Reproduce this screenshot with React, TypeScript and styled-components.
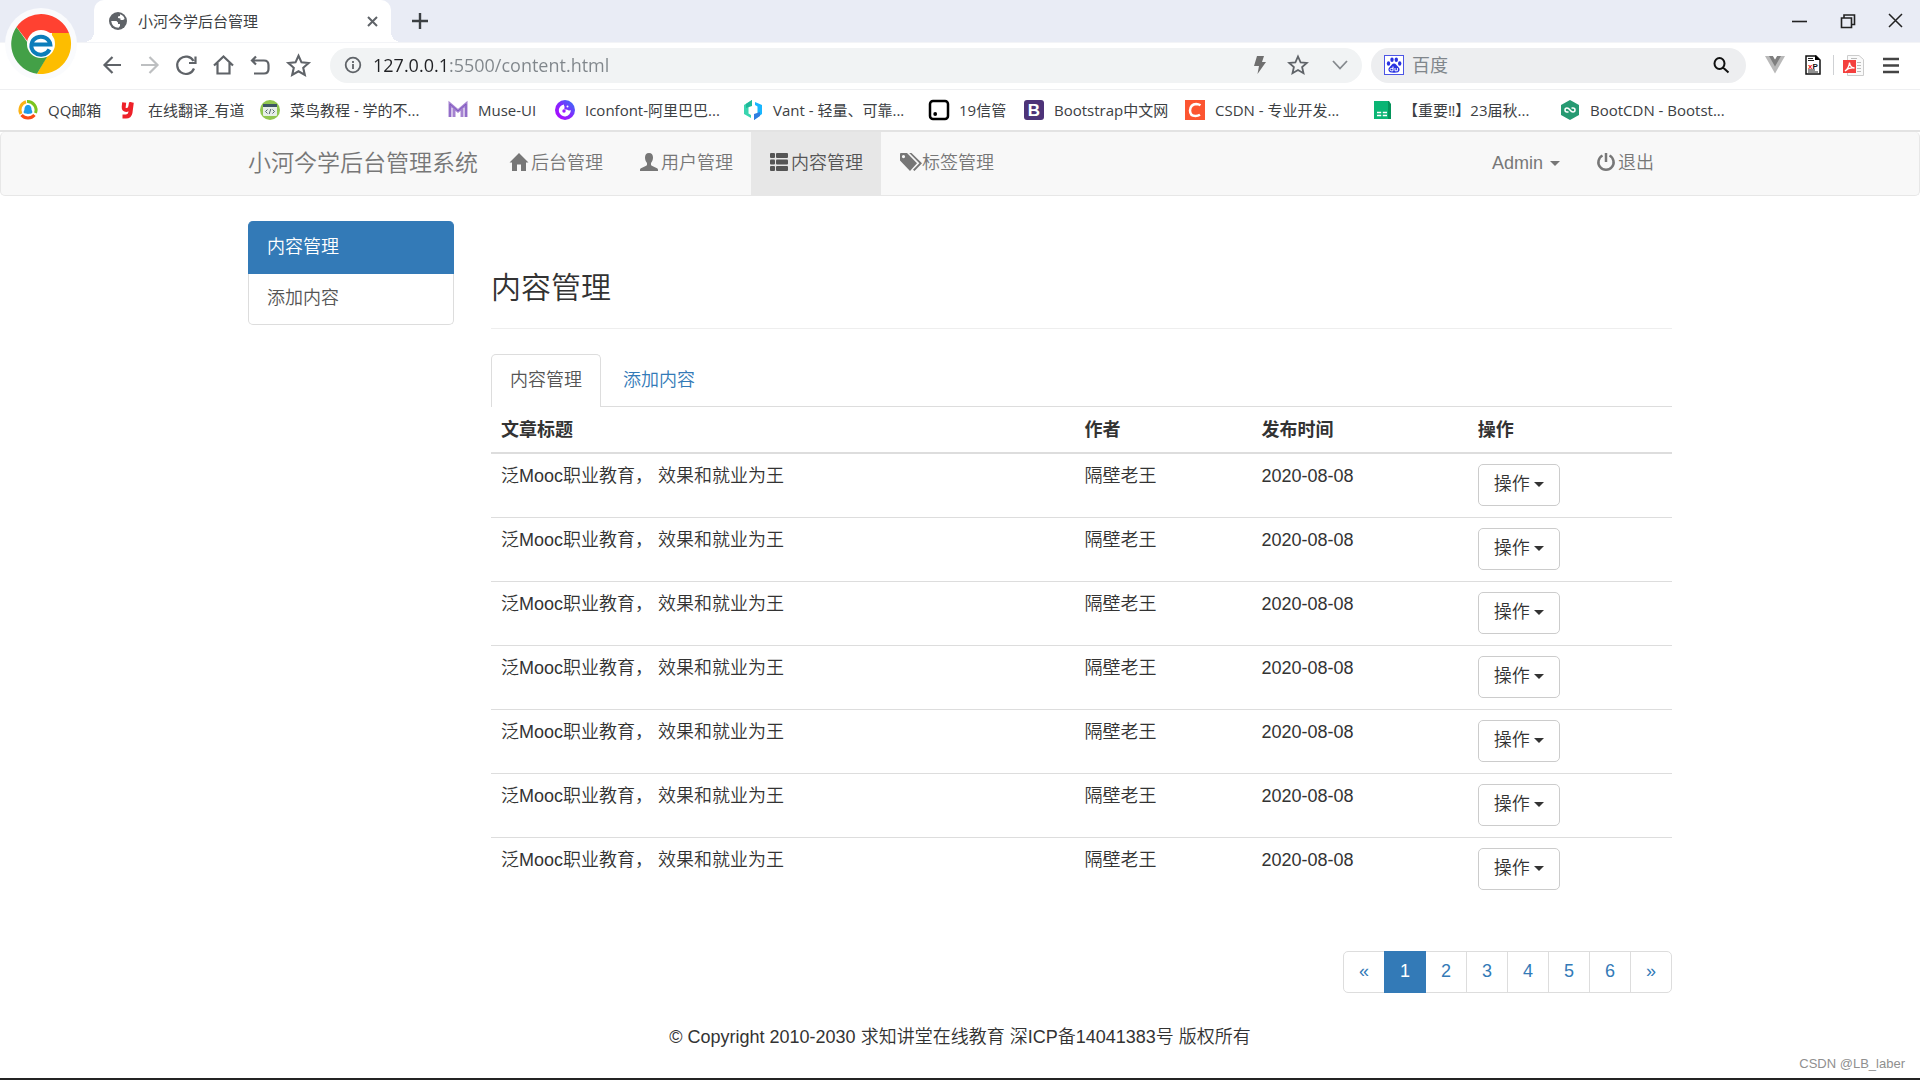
import React from 'react';
import styled, { createGlobalStyle, css } from 'styled-components';

const uiFont = `'Open Sans', 'Noto Sans CJK SC', sans-serif`;
const pageFont = `'Liberation Sans', 'Noto Sans CJK SC', sans-serif`;

const GlobalStyle = createGlobalStyle`
  *, *::before, *::after { box-sizing: border-box; }
  body { margin: 0; background: #fff; font-family: ${pageFont}; font-size: 18px; line-height: 25px; font-weight: 350; color: #333; }
  a { text-decoration: none; color: inherit; }
  button, input { font: inherit; color: inherit; margin: 0; padding: 0; border: 0; background: none; }
  ul { list-style: none; margin: 0; padding: 0; }
  svg { display: block; flex: none; overflow: visible; }
`;

const Screen = styled.div`
  min-height: 100vh;
  display: flex;
  flex-direction: column;
  border-bottom: 2px solid #242424;
  position: relative;
`;

/* ---------- browser frame ---------- */

const Browser = styled.header`
  font-family: ${uiFont};
  font-weight: 400;
  position: relative;
  color: #3c4043;
`;

const Logo = styled.div`
  position: absolute;
  left: 5px;
  top: 8px;
`;

const TabStrip = styled.div`
  height: 43px;
  background: #e9ecf5;
  border-bottom: 1px solid #f3f4f7;
  display: flex;
  align-items: flex-end;
  padding: 0 16px 0 94px;
`;

const BrowserTab = styled.div`
  width: 297px;
  height: 42px;
  background: #fff;
  border-radius: 10px 10px 0 0;
  display: flex;
  align-items: center;
  gap: 11px;
  padding: 0 13px 0 15px;
  font-size: 15px;
  position: relative;

  &::before, &::after {
    content: '';
    position: absolute;
    bottom: 0;
    width: 10px;
    height: 10px;
  }
  &::before { left: -10px; background: radial-gradient(circle at 0 0, transparent 10px, #fff 10px); }
  &::after { right: -10px; background: radial-gradient(circle at 100% 0, transparent 10px, #fff 10px); }
`;

const TabTitle = styled.span`
  flex: 1;
`;

const IconButton = styled.button`
  display: flex;
  align-items: center;
  justify-content: center;
  flex: none;
`;

const NewTab = styled(IconButton)`
  width: 18px;
  height: 42px;
  margin-left: 20px;
`;

const WindowControls = styled.div`
  margin-left: auto;
  height: 42px;
  display: flex;
  align-items: center;
  gap: 32px;
`;

const Toolbar = styled.div`
  height: 47px;
  border-bottom: 1px solid #eeeff1;
  display: flex;
  align-items: center;
  padding: 0 20px 2px 102px;
`;

const NavButtons = styled.div`
  display: flex;
  gap: 16px;
  margin-right: 20px;
`;

const AddressBar = styled.label`
  flex: 1;
  height: 35px;
  border-radius: 18px;
  background: #f1f3f4;
  display: flex;
  align-items: center;
  padding: 0 12px 0 14px;
  margin-right: 9px;
`;

const UrlInput = styled.input`
  flex: 1;
  min-width: 0;
  height: 30px;
  margin-left: 11px;
  font-size: 18px;
  outline: none;
  color: #80868b;
  background: linear-gradient(90deg, #202124 76px, #80868b 76px);
  -webkit-background-clip: text;
  background-clip: text;
  -webkit-text-fill-color: transparent;
`;

const AddressActions = styled.div`
  display: flex;
  align-items: center;
  gap: 22px;
`;

const SearchBox = styled.label`
  width: 375px;
  height: 35px;
  border-radius: 18px;
  background: #edeef0;
  display: flex;
  align-items: center;
  gap: 8px;
  padding: 0 17px 0 13px;
  margin-right: 19px;
`;

const SearchInput = styled.input`
  flex: 1;
  min-width: 0;
  font-size: 18px;
  outline: none;
  &::placeholder { color: #80868b; opacity: 1; }
`;

const Extensions = styled.div`
  display: flex;
  align-items: center;
`;

const ExtButton = styled(IconButton)<{ $gap?: number }>`
  margin-right: ${(p) => p.$gap ?? 0}px;
`;

const ExtDivider = styled.span`
  width: 1px;
  height: 20px;
  background: #cfd1d4;
  margin-right: 9px;
`;

const BookmarkBar = styled.nav`
  height: 42px;
  border-bottom: 2px solid #e3e3e3;
  display: flex;
  align-items: center;
  padding-left: 18px;
`;

const Bookmark = styled.a<{ $width: number }>`
  width: ${(p) => p.$width}px;
  flex: none;
  display: flex;
  align-items: center;
  gap: 10px;
  font-size: 15px;
  line-height: 20px;
  white-space: nowrap;
`;

/* ---------- site navigation ---------- */

const SiteNav = styled.nav`
  height: 64px;
  background: #f8f8f8;
  border: 1px solid #e7e7e7;
  border-top: 0;
  border-radius: 5px;
  margin-bottom: 25px;
`;

const Container = styled.div`
  width: 100%;
  max-width: 1424px;
  margin: 0 auto;
`;

const NavInner = styled(Container)`
  height: 100%;
  display: flex;
  color: #777;
`;

const Brand = styled.a`
  font-size: 23px;
  display: flex;
  align-items: center;
  margin-right: 13px;
`;

const NavList = styled.ul<{ $end?: boolean }>`
  display: flex;
  ${(p) => p.$end && css`margin-left: auto;`}
`;

const NavLink = styled.a<{ $active?: boolean; $gap?: number }>`
  height: 100%;
  display: flex;
  align-items: center;
  gap: ${(p) => p.$gap ?? 3}px;
  padding: 0 18px 0 19px;
  svg { margin-bottom: 3px; }
  ${(p) => p.$active && css`background: #e7e7e7; color: #555;`}
`;

const Caret = styled.span`
  border: 5px solid transparent;
  border-top-color: currentColor;
  border-bottom-width: 0;
`;

/* ---------- content ---------- */

const Layout = styled(Container)`
  display: grid;
  grid-template-columns: 206px minmax(0, 1fr);
  column-gap: 37px;
  align-items: start;
`;

const SideMenu = styled.nav`
  display: flex;
  flex-direction: column;
`;

const SideLink = styled.a<{ $active?: boolean }>`
  padding: 12px 18px 13px;
  border: 1px solid #ddd;
  border-top: 0;
  border-radius: 0 0 5px 5px;
  color: #555;
  ${(p) => p.$active && css`
    padding: 14px 18px 13px;
    border-color: #337ab7;
    border-radius: 5px 5px 0 0;
    background: #337ab7;
    color: #fff;
  `}
`;

const PageTitle = styled.h1`
  font-size: 30px;
  line-height: 34px;
  font-weight: 350;
  margin: 50px 0 25px;
  padding-bottom: 23px;
  border-bottom: 1px solid #eee;
`;

const Tabs = styled.div`
  display: flex;
  gap: 3px;
  border-bottom: 1px solid #ddd;
`;

const Tab = styled.a<{ $active?: boolean }>`
  padding: 13px 18px;
  border: 1px solid transparent;
  border-bottom: 0;
  border-radius: 5px 5px 0 0;
  color: #337ab7;
  ${(p) => p.$active && css`
    color: #555;
    background: #fff;
    border-color: #ddd;
    margin-bottom: -1px;
    padding-bottom: 14px;
  `}
`;

const Table = styled.table`
  width: 100%;
  border-spacing: 0;
  table-layout: fixed;

  th { text-align: left; padding: 11px 10px 9px; border-bottom: 2px solid #ddd; }
  td { vertical-align: top; padding: 10px 10px 11px; }
  tr + tr td { border-top: 1px solid #ddd; }
`;

const Col = styled.col<{ $share: number }>`
  width: ${(p) => p.$share}%;
`;

const ActionButton = styled.button`
  height: 42px;
  display: flex;
  align-items: center;
  gap: 4px;
  padding: 0 15px 2px;
  background: #fff;
  border: 1px solid #ccc;
  border-radius: 5px;
`;

const Pagination = styled.ul`
  display: flex;
  justify-content: flex-end;
  margin-top: 50px;
`;

const PageItem = styled.li`
  margin-left: -1px;
  &:first-child a { border-radius: 5px 0 0 5px; }
  &:last-child a { border-radius: 0 5px 5px 0; }
`;

const PageLink = styled.a<{ $active?: boolean }>`
  display: block;
  position: relative;
  padding: 7px 15px 8px;
  border: 1px solid #ddd;
  color: #337ab7;
  ${(p) => p.$active && css`
    z-index: 1;
    background: #337ab7;
    border-color: #337ab7;
    color: #fff;
  `}
`;

const Footer = styled.footer`
  text-align: center;
  padding: 32px 0 25px;
`;

const Watermark = styled.span`
  position: absolute;
  right: 15px;
  bottom: 4px;
  font-size: 13px;
  line-height: 20px;
  color: #8f8f8f;
`;

/* ---------- icons ---------- */

const line = (d: string, size = 20, color = '#5f6368', w = 2) => (
  <svg width={size} height={size} viewBox={`0 0 ${size} ${size}`} fill="none" stroke={color} strokeWidth={w}>
    <path d={d} />
  </svg>
);

const BrowserLogo = () => (
  <svg width="72" height="72" viewBox="-36 -36 72 72">
    <circle r="36" fill="#fafbfd" />
    <path d="M28-11A30 30 0 0 1-4 29.7L10 5 11-11Z" fill="#fdbd00" />
    <path d="M-24.5-17A30 30 0 0 0-4 29.7L6 13-11 2Z" fill="#43a047" />
    <path d="M-24.5-17A30 30 0 0 1 28-11H0L-13-2Z" fill="#ff4131" />
    <circle r="14" fill="#fff" />
    <path d="M8.500 5.500A9.500 9 0 1 1 9.300 .5H-9" fill="none" stroke="#0b7dba" strokeWidth="4" />
  </svg>
);

const Globe = () => (
  <svg width="18" height="18" viewBox="0 0 18 18">
    <circle cx="9" cy="9" r="9" fill="#5f6368" />
    <path d="M11 2.300Q14.800 3.500 15.600 7L14 8H11.500V6.500L9 6V4.500L11 4Z" fill="#fff" />
    <path d="M2.200 9H7.500L9 10.500V12H11V14L9.500 15.800Q3 15.500 2.200 9Z" fill="#fff" />
  </svg>
);

const Glyph = ({ children, width = 18 }: { children: React.ReactNode; width?: number }) => (
  <svg width={width} height="18" viewBox={`0 0 ${width} 18`} fill="currentColor">{children}</svg>
);
const HomeGlyph = () => <Glyph><path d="M9 0 18.500 9.500H16V18H11V11.500H7V18H2V9.500H-.5Z" /></Glyph>;
const UserGlyph = () => (
  <Glyph><path d="M9 0c2.800 0 4 1.800 4 4.500 0 2-.7 4.200-2 5.500v1.800c0 .5.3.8.8 1l4.700 2.300c.9.400 1.500 1 1.500 1.900v1H0v-1c0-.9.600-1.500 1.500-1.900l4.700-2.300c.5-.2.8-.5.8-1V10C5.700 8.700 5 6.500 5 4.500 5 1.800 6.200 0 9 0Z" /></Glyph>
);
const ListGlyph = () => (
  <Glyph>
    {[0, 6.5, 13].map((y) => (
      <g key={y}><rect y={y} width="5" height="5" rx="1" /><rect x="6" y={y} width="12" height="5" rx="1" /></g>
    ))}
  </Glyph>
);
const TagsGlyph = () => (
  <Glyph width={22}>
    <path fillRule="evenodd" d="M0 1.200C0 .5.500 0 1.200 0H7l10 10.300-7 7.700L0 7.500ZM3.500 2A1.600 1.600 0 1 0 3.500 5.200 1.600 1.600 0 0 0 3.500 2Z" />
    <path d="M9.200 0h2.300L22 10.300 14.500 18l-1.500-1.300 6.400-6.400Z" />
  </Glyph>
);
const PowerGlyph = () => (
  <svg width="18" height="18" viewBox="0 0 18 18" fill="none" stroke="currentColor" strokeWidth="2.500">
    <path d="M5.500 2.500a7.600 7.600 0 1 0 7 0M9 0v9" />
  </svg>
);

const StarPath = 'M10 1.500 12.600 7.300 18.800 7.900 14.100 12 15.500 18.200 10 15 4.500 18.200 5.900 12 1.200 7.900 7.400 7.300Z';

const Baidu = () => (
  <svg width="20" height="20" viewBox="0 0 20 20" fill="#2932e1">
    <rect x=".5" y=".5" width="19" height="19" fill="#fff" stroke="#4c55e6" />
    <ellipse cx="4.500" cy="8.500" rx="1.700" ry="2.200" /><ellipse cx="8" cy="4.800" rx="1.700" ry="2.300" />
    <ellipse cx="12.300" cy="4.800" rx="1.700" ry="2.300" /><ellipse cx="15.700" cy="8.500" rx="1.700" ry="2.200" />
    <path d="M10 8.500c1.700 0 2.500 1.800 3.800 3 1.400 1.300 2 2.200 1.700 3.800-.3 1.700-1.800 2.500-5.500 2.500s-5.200-.8-5.500-2.500c-.3-1.600.3-2.500 1.700-3.800 1.300-1.200 2.100-3 3.800-3Z" />
    <path d="M9 11.500v4.300H7.300a1.200 1.200 0 0 1 0-2.400H9M11 13v2.800h2.400V13" fill="none" stroke="#fff" />
  </svg>
);

const QQ = () => (
  <svg width="20" height="20" viewBox="0 0 20 20" fill="none" strokeWidth="3">
    <path d="M3 14A8.500 8.500 0 0 1 8 1.800" stroke="#fbb214" />
    <path d="M9 1.600A8.500 8.500 0 0 1 17.500 13" stroke="#7cc51f" />
    <path d="M3.500 15A8.500 8.500 0 0 0 16.500 15" stroke="#fb4b14" />
    <path d="M10 5c3 0 3.600 2.800 3.600 5 .8 1.300 1 2.500.4 3-2 1.200-6 1.200-8 0-.6-.5-.4-1.700.4-3C6.400 7.800 7 5 10 5Z" fill="#1e9be8" />
  </svg>
);
const Youdao = () => (
  <svg width="20" height="20" viewBox="0 0 20 20" fill="none" stroke="#ee2129" strokeWidth="4">
    <path d="M6.200 2.500 5.700 7q-.2 3 2.600 3 3.400 0 4-3.500L13 2.500M13.800 2.500 12.500 12.500Q11.700 16.500 8 16.500H4.500" />
  </svg>
);
const Runoob = () => (
  <svg width="20" height="20" viewBox="0 0 20 20">
    <circle cx="10" cy="10" r="10" fill="#91c74f" />
    <rect x="3" y="4" width="14" height="12" rx="1" fill="#e6eee8" /><rect x="3" y="4" width="14" height="3" fill="#3e5664" />
    <path d="M7.500 9.500 5.500 11.500l2 2M12.500 9.500l2 2-2 2M10.800 9l-1.600 5" fill="none" stroke="#53666d" />
  </svg>
);
const Muse = () => (
  <svg width="20" height="20" viewBox="0 0 20 20" fill="none">
    <path d="M2 17V4L10 11 18 4V17M6 17V8M14 17V8" stroke="#a583d0" strokeWidth="3" />
    <path d="M2 17V4L10 11 18 4V17" stroke="#7e57c2" />
  </svg>
);
const Iconfont = () => (
  <svg width="20" height="20" viewBox="0 0 20 20">
    <defs><linearGradient id="iconfont" x1="0" y1="1" x2="1" y2="0"><stop stopColor="#b800ff" /><stop offset=".5" stopColor="#8427ff" /><stop offset="1" stopColor="#2b7cf5" /></linearGradient></defs>
    <circle cx="10" cy="10" r="10" fill="url(#iconfont)" />
    <path d="M9 4.500A6 6 0 1 0 15.800 10C14 11.500 12.500 9 11 9.500 9.500 10 9 8.500 9.500 7.500 10 6.500 8.500 5.500 9 4.500Z" fill="#fff" />
    <circle cx="9" cy="11" r="1.700" fill="#9a1aff" /><circle cx="12.500" cy="6.500" r="1" fill="#fff" />
  </svg>
);
const Vant = () => (
  <svg width="20" height="20" viewBox="0 0 20 20">
    <path d="M9 0v4L5.500 6.500v7L8 15v3L1 14V5Z" fill="#39d5b0" /><path d="M9 0v6L3 8V4Z" fill="#20b899" />
    <path d="M11 20v-4l3.500-2.500v-7L12 5V2l7 3v9Z" fill="#18b6ff" /><path d="M11 20v-6l6-2v4Z" fill="#2f7fe0" />
  </svg>
);
const BoxDot = () => (
  <svg width="20" height="20" viewBox="0 0 20 20">
    <rect x="1" y="1" width="18" height="18" rx="3" fill="none" stroke="#000" strokeWidth="2.500" /><circle cx="6.200" cy="14" r="1.900" />
  </svg>
);
const Bootstrap = () => (
  <svg width="20" height="20" viewBox="0 0 20 20">
    <rect width="20" height="20" rx="3" fill="#4d3378" />
    <text x="10" y="16" textAnchor="middle" fontSize="17" fontWeight="700" fill="#fff" fontFamily="Liberation Sans, sans-serif">B</text>
  </svg>
);
const Csdn = () => (
  <svg width="20" height="20" viewBox="0 0 20 20">
    <rect width="20" height="20" fill="#fc5531" />
    <path d="M15.500 5.300Q13.500 4 11.200 4 5.500 4.300 5 10.500 5 16 10.500 16q2.500 0 4.500-1.200" fill="none" stroke="#fff" strokeWidth="2.500" />
  </svg>
);
const Sheet = () => (
  <svg width="20" height="20" viewBox="0 0 20 20">
    <path d="M2 1h14l2 3v15H2Z" fill="#04935a" /><path d="M1 1h14v18H1Z" fill="#0ab574" />
    <path d="M4 12.500h4.200M9.800 12.500H14M4 15.500h4.200M9.800 15.500H14" stroke="#fff" strokeWidth="1.500" />
  </svg>
);
const BootCdn = () => (
  <svg width="20" height="20" viewBox="0 0 20 20">
    <path d="M10 0 19 5V15L10 20 1 15V5Z" fill="#269a72" />
    <path d="M8.500 12H7A2 2 0 0 1 7 8Q8.500 8 10 10T13 12A2 2 0 0 0 13 8H11.500" fill="none" stroke="#fff" strokeWidth="1.500" />
  </svg>
);
const VueDev = () => (
  <svg width="20" height="20" viewBox="0 0 20 20">
    <path d="M0 1H20L10 18.500Z" fill="#b9b9b9" /><path d="M4 1H8L10 4.500 12 1H16L10 11.500Z" fill="#7f7f7f" /><path d="M8 1h4l-2 3.500Z" fill="#fff" />
  </svg>
);
const XPath = () => (
  <svg width="16" height="20" viewBox="0 0 16 20">
    <path d="M1 1H11L15 5V19H1Z" fill="#fff" stroke="#111" strokeWidth="1.500" /><path d="M10 0v5h5Z" />
    <path d="M3 3.500h5M3 5.500h6M3 15h7M3 17h10" stroke="#222" />
    <text x="3" y="13.500" fontSize="8" fontWeight="700" fill="#e11" fontFamily="Liberation Sans, sans-serif">x<tspan fill="#111">P</tspan></text>
  </svg>
);
const Pdf = () => (
  <svg width="21" height="21" viewBox="0 0 21 21">
    <path d="M4.500 .5H16l4.500 4V20.500H4.500Z" fill="#fafafa" stroke="#ccc" /><path d="M8 3.500h6M14 7.500h4M14 10.500h4M14 13.500h4M14 16.500h4" stroke="#bbb" />
    <rect y="5" width="13" height="13" fill="#f4403e" />
    <path d="M2 16q4-3 4.500-8.500Q7 12.500 11.500 13 6 12 2 16Z" fill="none" stroke="#fff" strokeWidth="1.300" />
  </svg>
);

/* ---------- data ---------- */

const bookmarks = [
  { label: 'QQ邮箱', icon: <QQ />, width: 100 },
  { label: '在线翻译_有道', icon: <Youdao />, width: 142 },
  { label: '菜鸟教程 - 学的不...', icon: <Runoob />, width: 188 },
  { label: 'Muse-UI', icon: <Muse />, width: 107 },
  { label: 'Iconfont-阿里巴巴...', icon: <Iconfont />, width: 188 },
  { label: 'Vant - 轻量、可靠...', icon: <Vant />, width: 186 },
  { label: '19信管', icon: <BoxDot />, width: 95 },
  { label: 'Bootstrap中文网', icon: <Bootstrap />, width: 161 },
  { label: 'CSDN - 专业开发...', icon: <Csdn />, width: 188 },
  { label: '【重要‼】23届秋...', icon: <Sheet />, width: 187 },
  { label: 'BootCDN - Bootst...', icon: <BootCdn />, width: 187 },
];

const articles = Array.from({ length: 7 }, (_, id) => ({
  id,
  title: '泛Mooc职业教育， 效果和就业为王',
  author: '隔壁老王',
  date: '2020-08-08',
}));

const pages = ['«', '1', '2', '3', '4', '5', '6', '»'];

export default function App() {
  return (
    <Screen>
      <GlobalStyle />
      <Browser>
        <TabStrip>
          <BrowserTab>
            <Globe />
            <TabTitle>小河今学后台管理</TabTitle>
            <IconButton aria-label="关闭标签页">{line('M1 1 10 10M10 1 1 10', 11, '#5f6368')}</IconButton>
          </BrowserTab>
          <NewTab aria-label="新标签页">{line('M8 0V16M0 8H16', 16, '#3c4043', 2.4)}</NewTab>
          <WindowControls>
            <IconButton aria-label="最小化">{line('M0 8.500H15', 16, '#222', 1.6)}</IconButton>
            <IconButton aria-label="还原">{line('M1.500 5H11.500V14.500H1.500ZM4 5V2H14.500V11.500H11.500', 16, '#222', 1.6)}</IconButton>
            <IconButton aria-label="关闭">{line('M1 1 14 14M14 1 1 14', 16, '#222', 1.5)}</IconButton>
          </WindowControls>
        </TabStrip>

        <Toolbar>
          <NavButtons>
            <IconButton aria-label="后退">{line('M19 10H3M10.500 2 2.500 10 10.500 18', 21, '#5f6368', 2.2)}</IconButton>
            <IconButton aria-label="前进">{line('M2 10H18M10.500 2 18.500 10 10.500 18', 21, '#bdbfc1', 2.2)}</IconButton>
            <IconButton aria-label="刷新">{line('M18 13.500A8.700 8.700 0 1 1 17.500 6M19.500 1.500V8H13', 21, '#5f6368', 2.2)}</IconButton>
            <IconButton aria-label="主页">{line('M1 10.500 10.500 1.500 20 10.500M4.500 8V18.500H16.500V8', 21, '#5f6368', 2.2)}</IconButton>
            <IconButton aria-label="撤销">{line('M6 1.500 2 5.500 6 9.500M2 5.500H14Q18.500 5.500 18.500 10V14Q18.500 18.500 14 18.500H4', 21, '#5f6368', 2.2)}</IconButton>
            <IconButton aria-label="收藏夹">
              <svg width="23" height="23" viewBox="0 0 20 20" fill="none" stroke="#5f6368" strokeWidth="1.800"><path d={StarPath} /></svg>
            </IconButton>
          </NavButtons>
          <AddressBar>
            <svg width="18" height="18" viewBox="0 0 18 18" fill="none" stroke="#5f6368" strokeWidth="1.800">
              <circle cx="9" cy="9" r="7.300" /><path d="M9 8v5M9 5v2" />
            </svg>
            <UrlInput aria-label="地址" defaultValue="127.0.0.1:5500/content.html" />
            <AddressActions>
              <svg width="14" height="18" viewBox="0 0 14 18" fill="#6f6f6f"><path d="M5 0H12L10 6H14L5.500 18 7 10H2Z" /></svg>
              {line(StarPath, 20, '#5f6368', 1.8)}
              {line('M3 6 10 13.500 17 6', 20, '#85898d', 1.8)}
            </AddressActions>
          </AddressBar>
          <SearchBox>
            <Baidu />
            <SearchInput aria-label="搜索" placeholder="百度" />
            {line('M11.500 6.500A5 5.500 0 1 1 1.500 6.500A5 5.500 0 1 1 11.500 6.500M10 10.500 15.500 15.500', 16, '#111', 2)}
          </SearchBox>
          <Extensions>
            <ExtButton $gap={20} aria-label="Vue"><VueDev /></ExtButton>
            <ExtButton $gap={12} aria-label="XPath"><XPath /></ExtButton>
            <ExtDivider />
            <ExtButton $gap={19} aria-label="PDF"><Pdf /></ExtButton>
            <ExtButton aria-label="菜单">{line('M0 2H16M0 8.500H16M0 15H16', 17, '#444', 2.4)}</ExtButton>
          </Extensions>
        </Toolbar>

        <BookmarkBar>
          {bookmarks.map((b) => (
            <Bookmark key={b.label} href="#" $width={b.width}>{b.icon}<span>{b.label}</span></Bookmark>
          ))}
        </BookmarkBar>
        <Logo><BrowserLogo /></Logo>
      </Browser>

      <SiteNav>
        <NavInner>
          <Brand href="#">小河今学后台管理系统</Brand>
          <NavList>
            <li><NavLink href="#"><HomeGlyph />后台管理</NavLink></li>
            <li><NavLink href="#"><UserGlyph />用户管理</NavLink></li>
            <li><NavLink href="#" $active><ListGlyph />内容管理</NavLink></li>
            <li><NavLink href="#" $gap={0}><TagsGlyph />标签管理</NavLink></li>
          </NavList>
          <NavList $end>
            <li><NavLink href="#" $gap={7}>Admin<Caret /></NavLink></li>
            <li><NavLink href="#"><PowerGlyph />退出</NavLink></li>
          </NavList>
        </NavInner>
      </SiteNav>

      <Layout>
        <SideMenu>
          <SideLink href="#" $active>内容管理</SideLink>
          <SideLink href="#">添加内容</SideLink>
        </SideMenu>
        <main>
          <PageTitle>内容管理</PageTitle>
          <Tabs>
            <Tab href="#" $active>内容管理</Tab>
            <Tab href="#">添加内容</Tab>
          </Tabs>
          <Table>
            <colgroup><Col $share={49.4} /><Col $share={15} /><Col $share={18.3} /><Col $share={17.3} /></colgroup>
            <thead>
              <tr><th>文章标题</th><th>作者</th><th>发布时间</th><th>操作</th></tr>
            </thead>
            <tbody>
              {articles.map((a) => (
                <tr key={a.id}>
                  <td>{a.title}</td>
                  <td>{a.author}</td>
                  <td>{a.date}</td>
                  <td><ActionButton>操作<Caret /></ActionButton></td>
                </tr>
              ))}
            </tbody>
          </Table>
          <Pagination>
            {pages.map((p) => (
              <PageItem key={p}><PageLink href="#" $active={p === '1'}>{p}</PageLink></PageItem>
            ))}
          </Pagination>
        </main>
      </Layout>

      <Footer>© Copyright 2010-2030 求知讲堂在线教育 深ICP备14041383号 版权所有</Footer>
      <Watermark>CSDN @LB_laber</Watermark>
    </Screen>
  );
}
